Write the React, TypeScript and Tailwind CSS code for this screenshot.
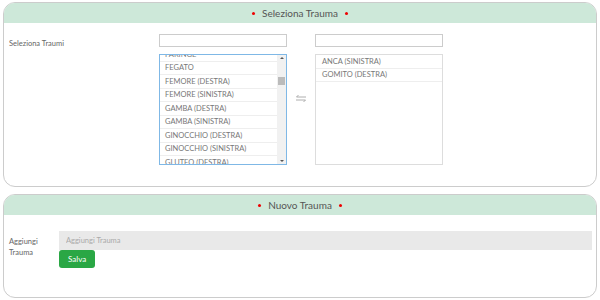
import React from 'react';

const leftItems = [
  'FARINGE',
  'FEGATO',
  'FEMORE (DESTRA)',
  'FEMORE (SINISTRA)',
  'GAMBA (DESTRA)',
  'GAMBA (SINISTRA)',
  'GINOCCHIO (DESTRA)',
  'GINOCCHIO (SINISTRA)',
  'GLUTEO (DESTRA)',
];

const rightItems = ['ANCA (SINISTRA)', 'GOMITO (DESTRA)'];

const CardHeader = ({ title }: { title: string }) => (
  <div className="h-[20px] bg-[#cde8d9] flex items-center justify-center gap-[7px] text-[10px] text-[#555]">
    <span className="w-[3px] h-[3px] rounded-full bg-[#e00]" />
    <span>{title}</span>
    <span className="w-[3px] h-[3px] rounded-full bg-[#e00]" />
  </div>
);

const SwapIcon = () => (
  <svg width="12" height="9" viewBox="0 0 12 9" fill="none" stroke="#999" strokeWidth="0.8">
    <path d="M11 3H1.5M3.5 1L1.5 3" />
    <path d="M1 6h9.5M8.5 8l2-2" />
  </svg>
);

const App = () => {
  return (
    <div className="w-[600px] h-[300px] bg-white px-[3px] pt-[2px] font-['Lato',sans-serif]">
      <div className="h-[185px] border border-[#ccc] rounded-[12px] overflow-hidden">
        <CardHeader title="Seleziona Trauma" />
        <div className="flex pt-[11px]">
          <div className="w-[155px] pl-[5px] pt-[4px] text-[7.5px] text-[#666]">Seleziona Traumi</div>
          <div className="flex items-start">
            <div className="flex flex-col w-[128px]">
              <input className="h-[13px] border border-[#ccc] outline-none" />
              <div className="mt-[7px] h-[111px] border border-[#7fb8e6] flex overflow-hidden">
                <div className="flex-1 overflow-hidden">
                  <div className="mt-[-7px]">
                    {leftItems.map((it) => (
                      <div
                        key={it}
                        className="h-[13.5px] flex items-center pl-[5px] border-b border-[#eee] text-[7.5px] text-[#777]"
                      >
                        {it}
                      </div>
                    ))}
                  </div>
                </div>
                <div className="w-[9px] bg-[#f1f1f1] flex flex-col items-center justify-between py-[2px]">
                  <span className="w-0 h-0 border-l-[2px] border-r-[2px] border-b-[2px] border-l-transparent border-r-transparent border-b-[#555]" />
                  <span className="w-[7px] h-[8px] bg-[#bbb] mb-[58px]" />
                  <span className="w-0 h-0 border-l-[2px] border-r-[2px] border-t-[2px] border-l-transparent border-r-transparent border-t-[#555]" />
                </div>
              </div>
            </div>
            <div className="w-[28px] flex justify-center mt-[60px]">
              <SwapIcon />
            </div>
            <div className="flex flex-col w-[128px]">
              <input className="h-[13px] border border-[#ccc] outline-none" />
              <div className="mt-[7px] h-[111px] border border-[#ddd]">
                {rightItems.map((it) => (
                  <div
                    key={it}
                    className="h-[13.5px] flex items-center pl-[6px] border-b border-[#eee] text-[7.5px] text-[#777]"
                  >
                    {it}
                  </div>
                ))}
              </div>
            </div>
          </div>
        </div>
      </div>

      <div className="mt-[7px] h-[104px] border border-[#ccc] rounded-[12px] overflow-hidden">
        <CardHeader title="Nuovo Trauma" />
        <div className="flex pt-[16px] pr-[4px]">
          <div className="w-[55px] pl-[5px] pt-[5px] text-[7.5px] leading-[11px] text-[#666]">
            Aggiungi
            <br />
            Trauma
          </div>
          <div className="flex-1 flex flex-col items-start">
            <input
              placeholder="Aggiungi Trauma"
              className="w-full h-[19px] bg-[#e9e9e9] px-[7px] text-[7.5px] text-[#555] placeholder:text-[#aaa] outline-none"
            />
            <button className="h-[18px] px-[9px] bg-[#2aa745] rounded-[3px] text-white text-[8px]">
              Salva
            </button>
          </div>
        </div>
      </div>
    </div>
  );
};

export default App;
